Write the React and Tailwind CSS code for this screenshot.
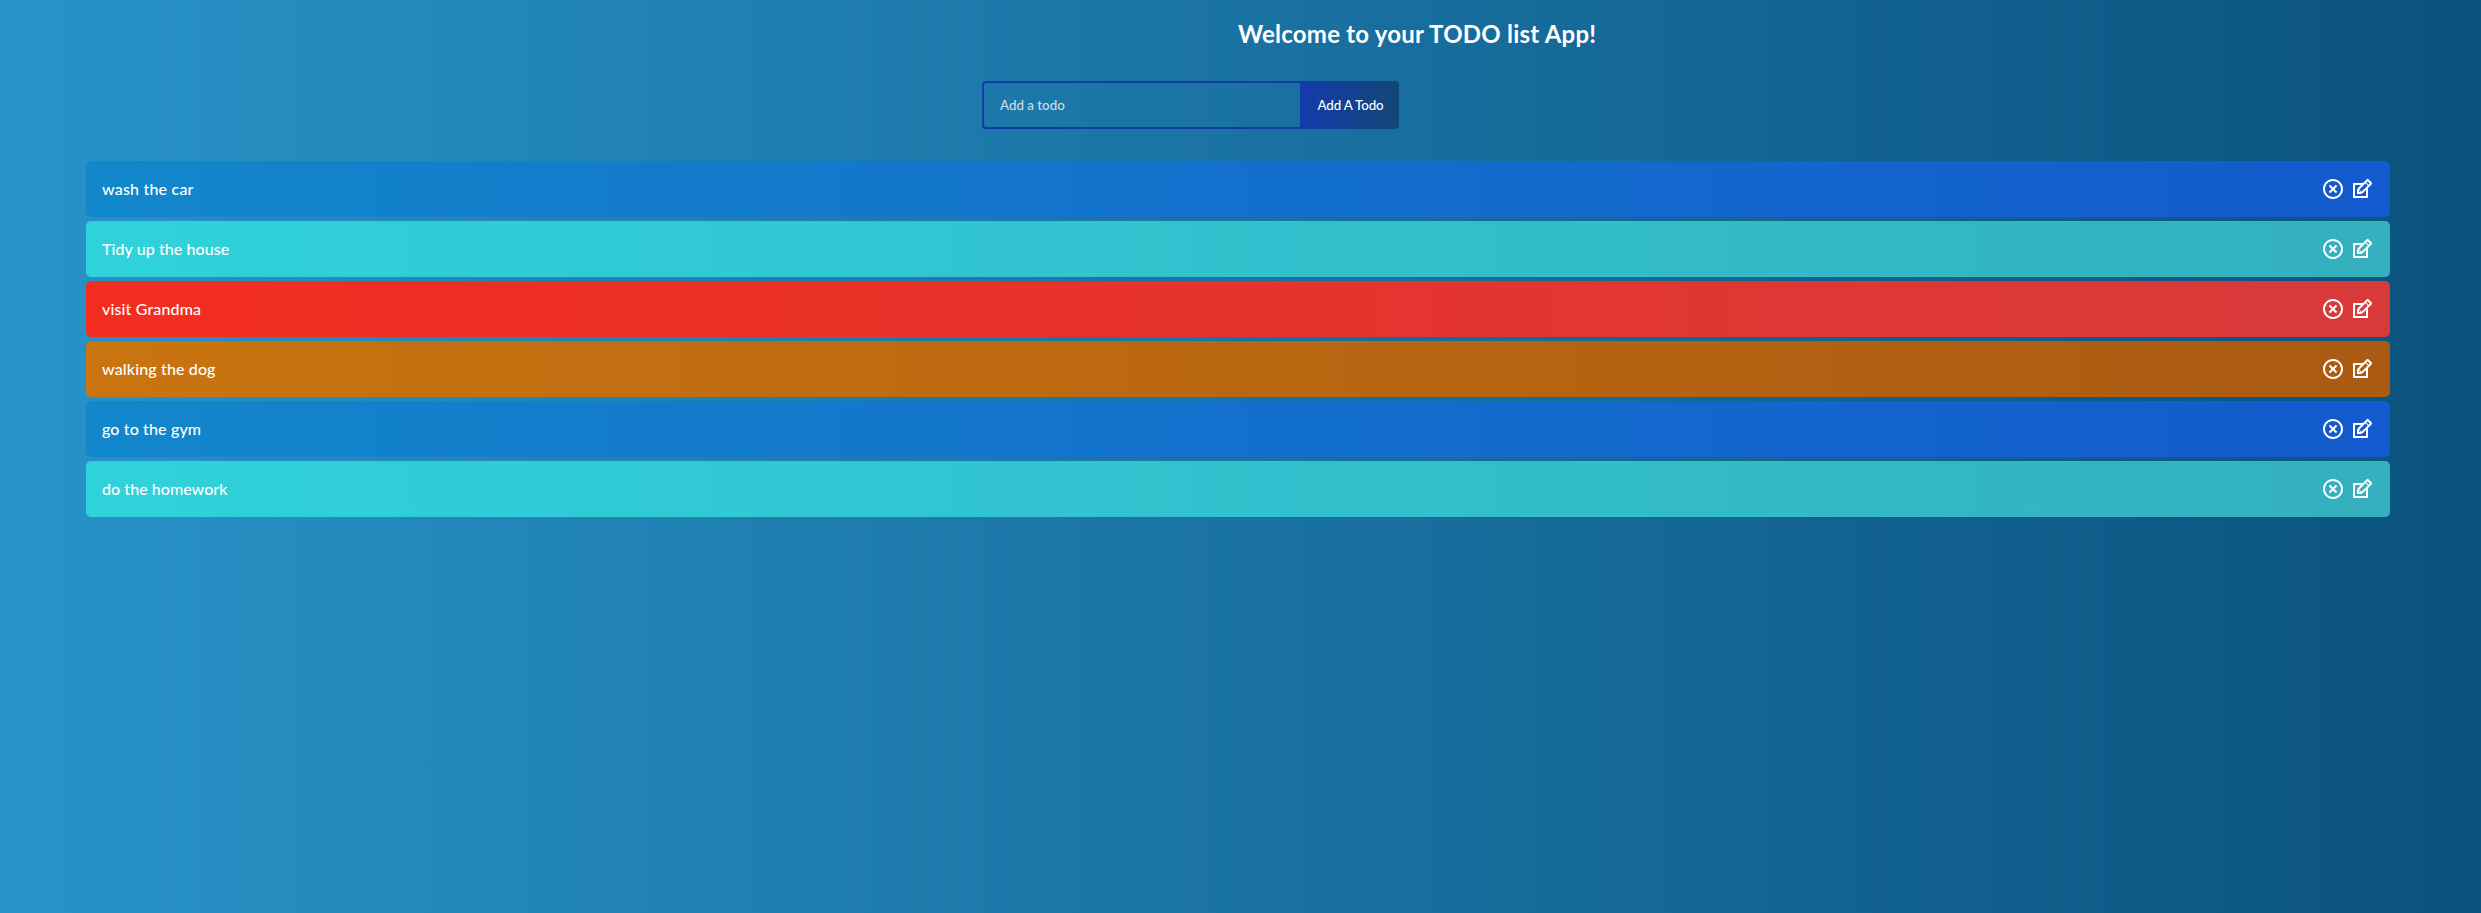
import { RiCloseCircleLine } from 'react-icons/ri';
import { TiEdit } from 'react-icons/ti';

const BLUE = 'bg-[linear-gradient(90deg,#1287cb_0%,#125acd_100%)]';
const TEAL = 'bg-[linear-gradient(90deg,#2fd2dc_0%,#34b0bf_100%)]';
const RED = 'bg-[linear-gradient(90deg,#f32d20_0%,#d83a3a_100%)]';
const ORANGE = 'bg-[linear-gradient(90deg,#ca7410_0%,#aa5a12_100%)]';

const todos = [
  { text: 'wash the car', color: BLUE, tracking: 'tracking-[0.2px]' },
  { text: 'Tidy up the house', color: TEAL, tracking: 'tracking-[0.08px]' },
  { text: 'visit Grandma', color: RED, tracking: 'tracking-[0.14px]' },
  { text: 'walking the dog', color: ORANGE, tracking: 'tracking-[0.14px]' },
  { text: 'go to the gym', color: BLUE, tracking: 'tracking-[0.14px]' },
  { text: 'do the homework', color: TEAL, tracking: 'tracking-[0.05px]' },
];

export default function App() {
  return (
    <div className="min-h-screen bg-[linear-gradient(90deg,#2893c8_0%,#0b527e_100%)] font-['Lato',sans-serif] text-white">
      <h1 className="pt-[17px] pl-[1238px] text-2xl leading-[34px] font-bold tracking-[0.23px] whitespace-nowrap">
        Welcome to your TODO list App!
      </h1>
      <form className="mt-[30px] ml-[982px] flex h-12" onSubmit={(e) => e.preventDefault()}>
        <input
          className="w-[318px] rounded-l-[4px] border-2 border-r-0 border-[#1539a9] bg-transparent px-4 pt-0.5 text-[13.33px] font-medium outline-none placeholder:text-[#d3dde3]"
          placeholder="Add a todo"
        />
        <button className="w-[99px] rounded-r-[4px] bg-[linear-gradient(90deg,#153aad_0%,#124776_100%)] pt-0.5 pl-[2px] text-[13.33px] font-medium tracking-[-0.15px] whitespace-nowrap">
          Add A Todo
        </button>
      </form>
      <ul className="mt-8 ml-[86px] flex w-[2304px] flex-col gap-1">
        {todos.map((todo) => (
          <li key={todo.text} className={`flex h-14 items-center justify-between rounded-[5px] px-4 ${todo.color}`}>
            <span className={`font-medium ${todo.tracking}`}>{todo.text}</span>
            <span className="flex items-center gap-[5px] text-2xl">
              <RiCloseCircleLine />
              <TiEdit />
            </span>
          </li>
        ))}
      </ul>
    </div>
  );
}
